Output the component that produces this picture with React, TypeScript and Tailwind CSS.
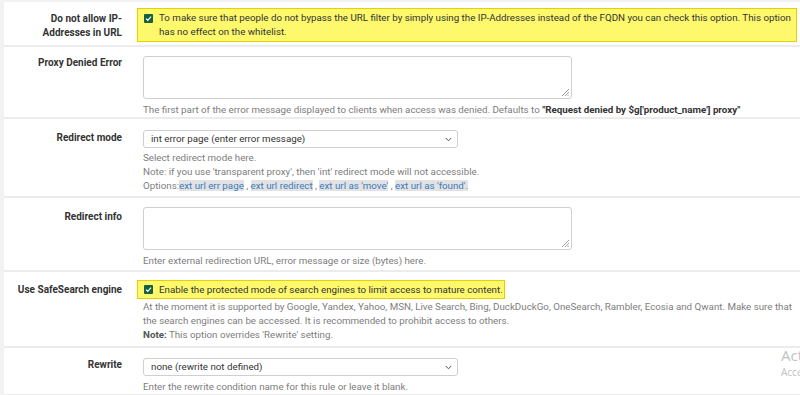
import type { ReactNode } from "react";

function Check() {
  return (
    <span className="mt-[3px] flex h-[9px] w-[9px] shrink-0 items-center justify-center rounded-[1px] bg-[#17603f]">
      <svg width="7" height="7" viewBox="0 0 10 10" fill="none">
        <path d="M1.5 5.2 4 7.6 8.6 2.4" stroke="#fff" strokeWidth="1.8" />
      </svg>
    </span>
  );
}

function TextArea() {
  return (
    <div className="relative ml-[6px] h-[43px] w-[429px] rounded-[3px] border border-[#cfcfcf] bg-white">
      <svg className="absolute bottom-[2px] right-[2px]" width="8" height="8" viewBox="0 0 8 8">
        <path d="M8 1 1 8M8 4 4 8M8 6.5 6.5 8" stroke="#888" strokeWidth="0.8" />
      </svg>
    </div>
  );
}

function Select({ value }: { value: string }) {
  return (
    <div className="ml-[6px] flex h-[18px] w-[315px] items-center justify-between rounded-[3px] border border-[#cfcfcf] bg-white pl-[7px] pr-[5px] text-[9.75px] text-[#333]">
      <span>{value}</span>
      <svg width="7" height="5" viewBox="0 0 7 5" fill="none">
        <path d="M0.8 1 3.5 3.8 6.2 1" stroke="#555" strokeWidth="1" />
      </svg>
    </div>
  );
}

function Row({
  label,
  labelPad,
  rowClass,
  children,
}: {
  label: ReactNode;
  labelPad: string;
  rowClass: string;
  children: ReactNode;
}) {
  return (
    <div className={`flex border-b-2 border-[#ececec] ${rowClass}`}>
      <div
        className={`w-[133px] shrink-0 pr-[15px] text-right text-[10px] font-bold leading-[14px] text-[#333] ${labelPad}`}
      >
        {label}
      </div>
      <div className="min-w-0 flex-1">{children}</div>
    </div>
  );
}

function Help({ className = "", children }: { className?: string; children: ReactNode }) {
  return (
    <div className={`ml-[6px] text-[9.75px] leading-[14px] text-[#7d7d7d] ${className}`}>
      {children}
    </div>
  );
}

const links = ["ext url err page", "ext url redirect", "ext url as 'move'", "ext url as 'found'."];

export default function App() {
  return (
    <div className="relative h-[395px] w-[800px] overflow-hidden bg-[#f2f2f2] pl-[4px] pt-[2px] font-['Roboto',sans-serif]">
      <div className="h-full bg-white">
        <Row label={<>Do not allow IP-<br />Addresses in URL</>} labelPad="pt-[4px]" rowClass="pt-[6px] pb-[3px]">
          <div className="flex w-[660px] gap-[6px] border border-[#e4d200] bg-[#fdf86c] py-[2px] pl-[6px] text-[9.75px] leading-[14px] text-[#333]">
            <Check />
            <span>
              To make sure that people do not bypass the URL filter by simply using the IP-Addresses instead of the FQDN you can check this option. This option has no effect on the whitelist.
            </span>
          </div>
        </Row>

        <Row label="Proxy Denied Error" labelPad="pt-0" rowClass="pt-[9px]">
          <TextArea />
          <Help className="mt-[4px]">
            The first part of the error message displayed to clients when access was denied. Defaults to{" "}
            <b className="text-[#333]">"Request denied by $g['product_name'] proxy"</b>
          </Help>
        </Row>

        <Row label="Redirect mode" labelPad="pt-[1px]" rowClass="pt-[11px] pb-[3px]">
          <Select value="int error page (enter error message)" />
          <Help className="mt-[3px]">
            <div>Select redirect mode here.</div>
            <div>Note: if you use 'transparent proxy', then 'int' redirect mode will not accessible.</div>
            <div>
              Options:
              {links.map((l, i) => (
                <span key={l}>
                  <span className="bg-[#e2e2e2] text-[#3a7bbf]">{l}</span>
                  {i < links.length - 1 ? " , " : ""}
                </span>
              ))}
            </div>
          </Help>
        </Row>

        <Row label="Redirect info" labelPad="pt-[3px]" rowClass="pt-[9px] pb-[2px]">
          <TextArea />
          <Help className="mt-[4px]">Enter external redirection URL, error message or size (bytes) here.</Help>
        </Row>

        <Row label="Use SafeSearch engine" labelPad="pt-[3px]" rowClass="pt-[8px] pb-[4px]">
          <div className="flex w-[368px] gap-[6px] whitespace-nowrap border border-[#e4d200] bg-[#fdf86c] py-[1px] pl-[6px] text-[9.75px] leading-[15px] text-[#333]">
            <Check />
            <span>Enable the protected mode of search engines to limit access to mature content.</span>
          </div>
          <Help className="mt-[1px]">
            At the moment it is supported by Google, Yandex, Yahoo, MSN, Live Search, Bing, DuckDuckGo, OneSearch, Rambler, Ecosia and Qwant. Make sure that the search engines can be accessed. It is recommended to prohibit access to others.
            <div>
              <b className="text-[#555]">Note:</b> This option overrides 'Rewrite' setting.
            </div>
          </Help>
        </Row>

        <Row label="Rewrite" labelPad="pt-0" rowClass="pt-[10px] border-b-0">
          <Select value="none (rewrite not defined)" />
          <Help className="mt-[4px]">Enter the rewrite condition name for this rule or leave it blank.</Help>
        </Row>
      </div>

      <div className="absolute left-[781px] top-[345px] font-['Open_Sans',sans-serif] text-[#c2c2c2]">
        <div className="text-[15px] leading-[20px]">Activate</div>
        <div className="text-[10px] leading-[14px]">Access</div>
      </div>
    </div>
  );
}
